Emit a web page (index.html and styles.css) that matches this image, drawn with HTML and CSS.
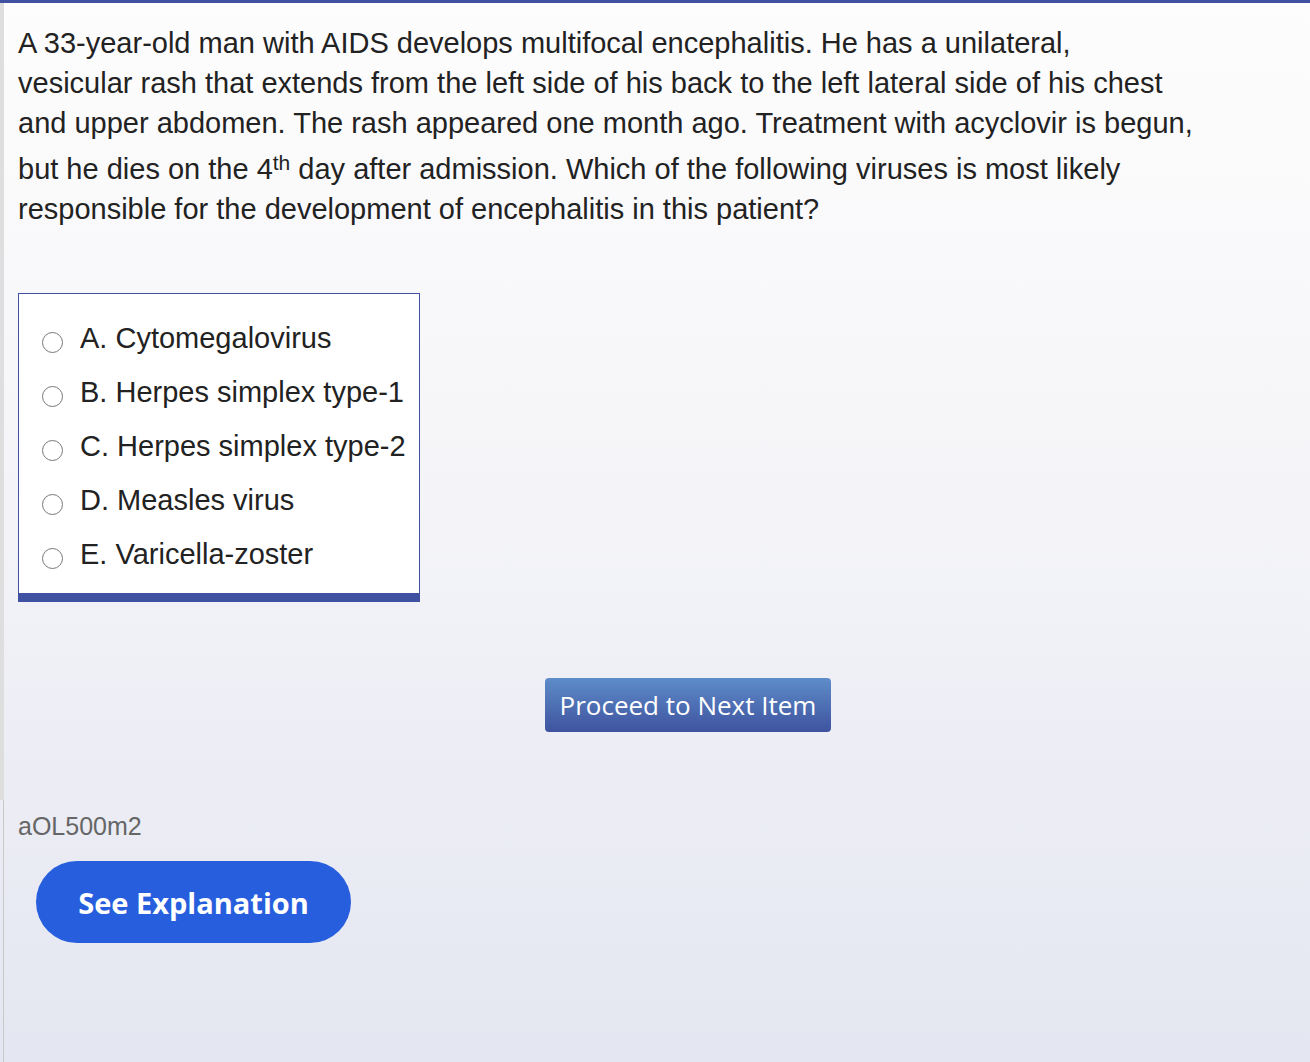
FILE: index.html
```html
<!DOCTYPE html>
<html>
<head>
<meta charset="utf-8">
<link rel="stylesheet" href="styles.css">
</head>
<body>
<div class="page">
  <div class="main">
    <p class="stem">A 33-year-old man with AIDS develops multifocal encephalitis. He has a unilateral,<br>vesicular rash that extends from the left side of his back to the left lateral side of his chest<br>and upper abdomen. The rash appeared one month ago. Treatment with acyclovir is begun,<br>but he dies on the 4<sup>th</sup> day after admission. Which of the following viruses is most likely<br>responsible for the development of encephalitis in this patient?</p>
    <div class="choices">
      <label class="choice"><span class="radio"></span>A. Cytomegalovirus</label>
      <label class="choice"><span class="radio"></span>B. Herpes simplex type-1</label>
      <label class="choice"><span class="radio"></span>C. Herpes simplex type-2</label>
      <label class="choice"><span class="radio"></span>D. Measles virus</label>
      <label class="choice"><span class="radio"></span>E. Varicella-zoster</label>
    </div>
    <div class="proceed-row">
      <button class="proceed">Proceed to Next Item</button>
    </div>
  </div>
  <div class="footer">
    <div class="code">aOL500m2</div>
    <button class="explain">See Explanation</button>
  </div>
</div>
</body>
</html>
```

FILE: styles.css
```css
html, body {
  margin: 0;
  padding: 0;
}
body {
  width: 1310px;
  height: 1062px;
  overflow: hidden;
  background: linear-gradient(to bottom, #fdfdfd 0%, #f6f6f9 40%, #e4e6f1 100%);
  font-family: "Liberation Sans", Arial, sans-serif;
  color: #222;
}
.page {
  border-top: 3px solid #3f51a0;
  height: 1059px;
  box-sizing: border-box;
}
.main {
  border-left: 4px solid #dedede;
  height: 797px;
  padding: 0 0 0 14px;
  box-sizing: border-box;
}
.stem {
  margin: 0;
  padding-top: 20px;
  font-size: 29px;
  line-height: 40px;
  width: 1260px;
}
.stem sup {
  font-size: 21px;
  vertical-align: 9px;
}
.choices {
  margin-top: 64px;
  width: 402px;
  border: 1px solid #3f51a0;
  border-bottom: 9px solid #3f51a0;
  background: #fff;
  box-sizing: border-box;
  padding: 17px 0 12px 23px;
  display: flex;
  flex-direction: column;
}
.choice {
  display: flex;
  align-items: center;
  height: 54px;
  font-size: 29px;
  color: #222;
}
.radio {
  box-sizing: border-box;
  width: 21px;
  height: 21px;
  border: 1.5px solid #777;
  border-radius: 50%;
  background: #fff;
  margin-right: 17px;
  margin-top: 8px;
  flex: none;
}
.proceed-row {
  display: flex;
  padding-left: 527px;
  margin-top: 76px;
}
.proceed {
  width: 286px;
  height: 54px;
  border: none;
  border-radius: 4px;
  background: linear-gradient(to bottom, #5e8cc9 0%, #3e539f 100%);
  color: #fff;
  font-family: "Open Sans", sans-serif;
  font-size: 26px;
  padding: 0;
}
.footer {
  border-left: 1px solid #c9c9c9;
  margin-left: 3px;
  height: 262px;
  padding-left: 14px;
  box-sizing: border-box;
}
.code {
  padding-top: 11px;
  font-size: 25px;
  line-height: 30px;
  color: #666;
}
.explain {
  margin-top: 20px;
  margin-left: 18px;
  width: 315px;
  height: 82px;
  border: none;
  border-radius: 41px;
  background: #265ede;
  color: #fff;
  font-family: "Open Sans", sans-serif;
  font-weight: 700;
  font-size: 29px;
  padding: 0;
}
```
